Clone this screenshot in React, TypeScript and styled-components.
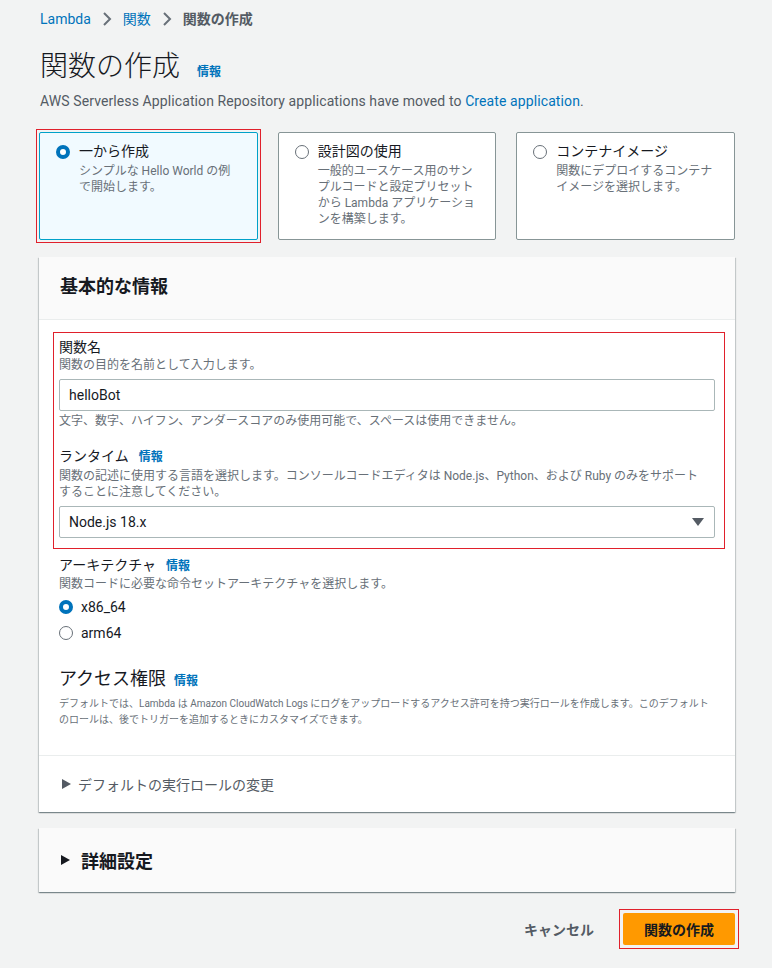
import React from "react";
import styled, { createGlobalStyle } from "styled-components";

const GlobalStyle = createGlobalStyle`
  html, body { margin: 0; padding: 0; background: #f2f3f3; }
  body {
    font-family: Roboto, "Noto Sans CJK JP", sans-serif;
    color: #16191f;
    -webkit-font-smoothing: antialiased;
  }
  * { box-sizing: border-box; }
`;

const Page = styled.div`
  min-height: 968px;
  padding: 0 37px 20px 39px;
  border-right: 2px solid #ffffff;
`;

const Breadcrumbs = styled.nav`
  display: flex;
  align-items: center;
  gap: 11px;
  padding: 9px 0 0 1px;
  font-size: 14px;
  line-height: 20px;
`;

const Crumb = styled.span<{ $current?: boolean }>`
  color: ${(p) => (p.$current ? "#545b64" : "#0073bb")};
  font-weight: ${(p) => (p.$current ? 700 : 400)};
`;

const Chevron = () => (
  <svg width="10" height="14" viewBox="0 0 10 14">
    <polyline points="2,1 8,7 2,13" fill="none" stroke="#687078" strokeWidth="2" />
  </svg>
);

const TitleRow = styled.div`
  display: flex;
  align-items: baseline;
  gap: 17px;
  margin-top: 20px;
  padding-left: 1px;
`;

const Title = styled.h1`
  margin: 0;
  font-size: 28px;
  line-height: 36px;
  font-weight: 300;
  color: #16191f;
`;

const Info = styled.a`
  font-size: 12px;
  font-weight: 700;
  color: #0073bb;
  text-decoration: none;
`;

const Lead = styled.p`
  margin: 6px 0 0 1px;
  font-size: 14px;
  line-height: 20px;
  letter-spacing: 0.1px;
  color: #545b64;
`;

const Link = styled.a`
  color: #0073bb;
  text-decoration: none;
`;

const Tiles = styled.div`
  display: grid;
  grid-template-columns: repeat(3, 1fr);
  gap: 20px;
  margin-top: 21px;
`;

const Marked = styled.div<{ $pad: number }>`
  display: flex;
  margin: -${(p) => p.$pad + 1}px;
  padding: ${(p) => p.$pad}px;
  border: 1px solid #e0202b;
`;

const Tile = styled.div<{ $selected?: boolean }>`
  flex: 1;
  display: flex;
  align-items: flex-start;
  gap: 9px;
  height: 108px;
  padding: 12px 10px 0 16px;
  background: ${(p) => (p.$selected ? "#f1faff" : "#ffffff")};
  border: 1px solid ${(p) => (p.$selected ? "#00a1c9" : "#879596")};
  border-radius: 2px;
`;

const Radio = styled.span<{ $checked?: boolean }>`
  flex: none;
  width: 14px;
  height: 14px;
  border-radius: 50%;
  background: #ffffff;
  border: ${(p) => (p.$checked ? "4px solid #0073bb" : "1.5px solid #687078")};
`;

const TileText = styled.div`
  display: flex;
  flex-direction: column;
  margin-top: -3px;
`;

const TileTitle = styled.span`
  font-size: 14px;
  line-height: 19px;
  color: #16191f;
`;

const TileDesc = styled.span`
  margin-top: 2px;
  font-size: 12px;
  line-height: 16px;
  color: #687078;
`;

const Panel = styled.section<{ $gap: number }>`
  margin-top: ${(p) => p.$gap}px;
  background: #ffffff;
  box-shadow: 0 1px 1px 0 rgba(0, 28, 36, 0.3), 1px 1px 1px 0 rgba(0, 28, 36, 0.15),
    -1px 1px 1px 0 rgba(0, 28, 36, 0.15);
`;

const PanelHeader = styled.header`
  padding: 18px 20px 20px 21px;
  background: #fafafa;
  border-bottom: 1px solid #eaeded;
`;

const PanelTitle = styled.h2`
  margin: 0;
  font-size: 18px;
  line-height: 24px;
  font-weight: 700;
  color: #16191f;
`;

const PanelBody = styled.div`
  padding: 17px 20px 27px 20px;
  border-bottom: 1px solid #eaeded;
`;

const Highlight = styled.div`
  margin: -5px -10px 0 -6px;
  padding: 4px 9px 10px 5px;
  border: 1px solid #e0202b;
`;

const Label = styled.div<{ $big?: boolean; $mt?: number }>`
  display: flex;
  align-items: baseline;
  gap: ${(p) => (p.$big ? 8 : 10)}px;
  margin-top: ${(p) => p.$mt ?? 0}px;
  font-size: ${(p) => (p.$big ? 18 : 14)}px;
  line-height: ${(p) => (p.$big ? 24 : 20)}px;
  color: #16191f;
`;

const Desc = styled.div<{ $small?: boolean; $mt?: number }>`
  margin-top: ${(p) => p.$mt ?? 0}px;
  font-size: ${(p) => (p.$small ? 10 : 12)}px;
  line-height: 16px;
  color: #687078;
  white-space: ${(p) => (p.$small ? "nowrap" : "normal")};
`;

const Field = styled.div`
  display: flex;
  align-items: center;
  justify-content: space-between;
  height: 32px;
  margin-top: 6px;
  padding: 0 10px 0 9px;
  border: 1px solid #aab7b8;
  border-radius: 2px;
  background: #ffffff;
  font-size: 14px;
  color: #16191f;
`;

const Caret = () => (
  <svg width="12" height="8" viewBox="0 0 12 8">
    <polygon points="0,0 12,0 6,8" fill="#545b64" />
  </svg>
);

const RadioList = styled.div`
  display: flex;
  flex-direction: column;
  margin-top: 2px;
`;

const RadioRow = styled.label`
  display: flex;
  align-items: center;
  gap: 8px;
  height: 26px;
  font-size: 14px;
  color: #16191f;
`;

const ExpandRow = styled.div<{ $header?: boolean }>`
  display: flex;
  align-items: center;
  gap: ${(p) => (p.$header ? 11 : 7)}px;
  height: ${(p) => (p.$header ? 64 : 56)}px;
  padding-left: ${(p) => (p.$header ? 22 : 23)}px;
  background: ${(p) => (p.$header ? "#fafafa" : "#ffffff")};
  font-size: ${(p) => (p.$header ? 18 : 14)}px;
  font-weight: ${(p) => (p.$header ? 700 : 400)};
  color: ${(p) => (p.$header ? "#16191f" : "#545b64")};
`;

const Triangle = ({ color }: { color: string }) => (
  <svg width="9" height="10" viewBox="0 0 9 10">
    <polygon points="0,0 9,5 0,10" fill={color} />
  </svg>
);

const Actions = styled.div`
  display: flex;
  justify-content: flex-end;
  align-items: center;
  gap: 9px;
  margin-top: 21px;
`;

const Button = styled.button<{ $primary?: boolean }>`
  height: 32px;
  padding: 0 ${(p) => (p.$primary ? 21 : 20)}px;
  border: none;
  border-radius: 2px;
  background: ${(p) => (p.$primary ? "#ff9900" : "transparent")};
  color: ${(p) => (p.$primary ? "#16191f" : "#545b64")};
  font-family: inherit;
  font-size: 14px;
  font-weight: 700;
  cursor: pointer;
`;

export default function App() {
  return (
    <>
      <GlobalStyle />
      <Page>
        <Breadcrumbs>
          <Crumb>Lambda</Crumb>
          <Chevron />
          <Crumb>関数</Crumb>
          <Chevron />
          <Crumb $current>関数の作成</Crumb>
        </Breadcrumbs>

        <TitleRow>
          <Title>関数の作成</Title>
          <Info>情報</Info>
        </TitleRow>
        <Lead>
          AWS Serverless Application Repository applications have moved to{" "}
          <Link>Create application</Link>.
        </Lead>

        <Tiles>
          <Marked $pad={2}>
            <Tile $selected>
              <Radio $checked />
              <TileText>
                <TileTitle>一から作成</TileTitle>
                <TileDesc>
                  シンプルな Hello World の例<br />で開始します。
                </TileDesc>
              </TileText>
            </Tile>
          </Marked>
          <Tile>
            <Radio />
            <TileText>
              <TileTitle>設計図の使用</TileTitle>
              <TileDesc>
                一般的ユースケース用のサン<br />プルコードと設定プリセット<br />から Lambda アプリケーショ
                <br />ンを構築します。
              </TileDesc>
            </TileText>
          </Tile>
          <Tile>
            <Radio />
            <TileText>
              <TileTitle>コンテナイメージ</TileTitle>
              <TileDesc>
                関数にデプロイするコンテナ<br />イメージを選択します。
              </TileDesc>
            </TileText>
          </Tile>
        </Tiles>

        <Panel $gap={17}>
          <PanelHeader>
            <PanelTitle>基本的な情報</PanelTitle>
          </PanelHeader>
          <PanelBody>
            <Highlight>
              <Label>関数名</Label>
              <Desc>関数の目的を名前として入力します。</Desc>
              <Field>helloBot</Field>
              <Desc $mt={2}>
                文字、数字、ハイフン、アンダースコアのみ使用可能で、スペースは使用できません。
              </Desc>
              <Label $mt={17}>
                ランタイム <Info>情報</Info>
              </Label>
              <Desc $mt={1}>
                関数の記述に使用する言語を選択します。コンソールコードエディタは Node.js、Python、および Ruby のみをサポート
                <br />
                することに注意してください。
              </Desc>
              <Field>
                Node.js 18.x
                <Caret />
              </Field>
            </Highlight>

            <Label $mt={6}>
              アーキテクチャ <Info>情報</Info>
            </Label>
            <Desc>関数コードに必要な命令セットアーキテクチャを選択します。</Desc>
            <RadioList>
              <RadioRow>
                <Radio $checked />
                x86_64
              </RadioRow>
              <RadioRow>
                <Radio />
                arm64
              </RadioRow>
            </RadioList>

            <Label $big $mt={21}>
              アクセス権限 <Info>情報</Info>
            </Label>
            <Desc $small $mt={3}>
              デフォルトでは、Lambda は Amazon CloudWatch Logs にログをアップロードするアクセス許可を持つ実行ロールを作成します。このデフォルト
              <br />
              のロールは、後でトリガーを追加するときにカスタマイズできます。
            </Desc>
          </PanelBody>
          <ExpandRow>
            <Triangle color="#545b64" />
            デフォルトの実行ロールの変更
          </ExpandRow>
        </Panel>

        <Panel $gap={16}>
          <ExpandRow $header>
            <Triangle color="#16191f" />
            詳細設定
          </ExpandRow>
        </Panel>

        <Actions>
          <Button>キャンセル</Button>
          <Marked $pad={3}>
            <Button $primary>関数の作成</Button>
          </Marked>
        </Actions>
      </Page>
    </>
  );
}
